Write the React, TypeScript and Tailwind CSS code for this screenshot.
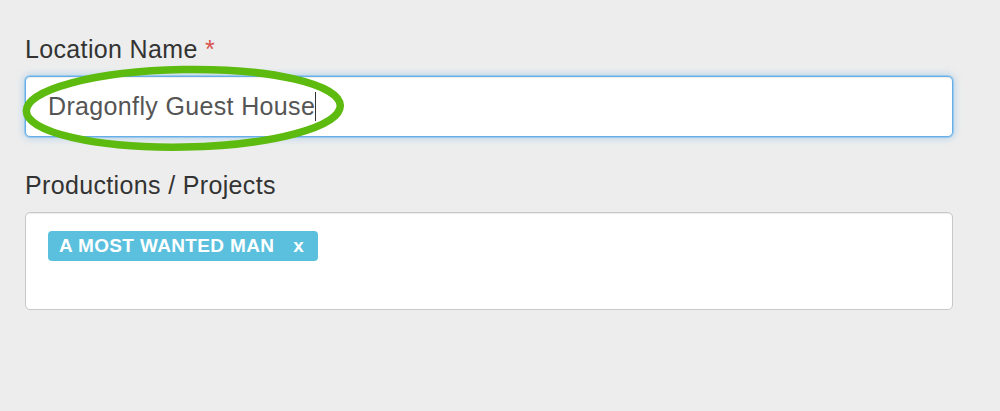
export default function App() {
  return (
    <div className="relative h-[411px] w-[1000px] overflow-hidden bg-[#ededed] font-['Liberation_Sans',Arial,sans-serif]">
      <div className="w-[953px] pl-[25px] pt-[34px]">
        <label className="block text-[25px] leading-[30px] tracking-[0.35px] text-[#333]">
          Location Name <span className="text-[#d9534f]">*</span>
        </label>
        <div className="mt-[12px] flex h-[61px] items-center rounded-[5px] border border-[#66afe9] bg-white pl-[22px] text-[25px] tracking-[0.35px] text-[#555] shadow-[inset_0_1px_1px_rgba(0,0,0,0.075),0_0_0_1px_rgba(102,175,233,0.45),0_0_9px_rgba(102,175,233,0.6)]">
          <span>Dragonfly Guest House</span>
          <span className="inline-block h-[29px] w-px bg-[#333]" />
        </div>

        <label className="mt-[33px] block text-[25px] leading-[30px] tracking-[0.35px] text-[#333]">
          Productions / Projects
        </label>
        <div className="mt-[12px] h-[98px] rounded-[5px] border border-[#c8c8c8] bg-white pl-[22px] pt-[18px] shadow-[inset_0_1px_1px_rgba(0,0,0,0.075)]">
          <span className="inline-flex h-[30px] items-center rounded-[4px] bg-[#5bc0de] pl-[11px] pr-[14px] text-[19px] font-bold tracking-[0.35px] text-white">
            A MOST WANTED MAN
            <span className="ml-[19px]">x</span>
          </span>
        </div>
      </div>

      {/* annotation circle drawn over the field */}
      <svg
        className="pointer-events-none absolute left-0 top-0"
        width="1000"
        height="411"
        viewBox="0 0 1000 411"
      >
        <ellipse
          cx="183.3"
          cy="108.3"
          rx="157"
          ry="38.8"
          fill="none"
          stroke="#5dba0e"
          strokeWidth="7.5"
          transform="rotate(-1 183.3 108.3)"
        />
      </svg>
    </div>
  );
}
